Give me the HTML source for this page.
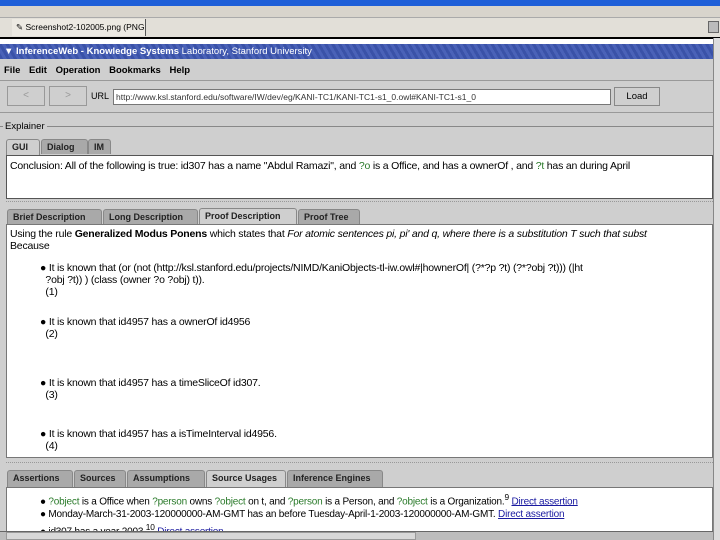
<!DOCTYPE html>
<html><head><style>
*{margin:0;padding:0;box-sizing:border-box}
body{width:720px;height:540px;overflow:hidden;background:#cfcfcf;font-family:"Liberation Sans",sans-serif;font-size:10px;color:#000;position:relative}
.a{position:absolute}
.tab{position:absolute;height:15px;border:1px solid #888;border-bottom:none;background:#a9a9a9;font-weight:bold;font-size:9px;padding:2px 5px;color:#222;border-radius:3px 3px 0 0;white-space:nowrap;overflow:hidden}
.tab.s{background:#cfcfcf}
.w{background:#fff;border:1px solid #777}
.g{color:#2a7a2a}
.l{color:#1a1aa0;text-decoration:underline}
.t{font-size:10.5px;letter-spacing:-0.2px;white-space:nowrap}
</style></head><body>
<div class="a" style="left:0;top:0;width:720px;height:6px;background:#1f5fd8"></div>
<div class="a" style="left:0;top:6px;width:720px;height:12px;background:#d8d4cc;border-bottom:1px solid #aaa"></div>
<div class="a" style="left:0;top:18px;width:720px;height:20px;background:#e2dfd8"></div>
<div class="a" style="left:12px;top:19px;width:134px;height:17px;border-right:1px solid #555;padding:3px 4px;font-size:8.5px;background:#ece9e2;white-space:nowrap;overflow:hidden">✎ Screenshot2-102005.png (PNG Ima...</div>
<div class="a" style="left:708px;top:21px;width:11px;height:12px;background:#bbb;border:1px solid #666"></div>
<div class="a" style="left:0;top:37px;width:720px;height:2px;background:#000"></div>
<div class="a" style="left:0;top:39px;width:720px;height:5px;background:#fff"></div>
<div class="a" style="left:0;top:44px;width:713px;height:15px;background:repeating-linear-gradient(60deg,#3a52a8 0 3px,#4a62b8 3px 6px);color:#fff;font-size:9.5px;padding:2px 4px;font-weight:bold;white-space:nowrap">▼ InferenceWeb - Knowledge Systems <span style="font-weight:normal">Laboratory, Stanford University</span></div>
<div class="a" style="left:713px;top:38px;width:7px;height:502px;background:#ddd;border-left:1px solid #888"></div>
<div class="a" style="left:4px;top:65px;font-weight:bold;font-size:9.5px;word-spacing:6px;white-space:nowrap">File Edit Operation Bookmarks Help</div>
<div class="a" style="left:0;top:80px;width:713px;height:33px;border-top:1px solid #999;border-bottom:1px solid #999"></div>
<div class="a" style="left:7px;top:86px;width:38px;height:20px;border:1px solid #999;color:#999;text-align:center;line-height:18px">&lt;</div>
<div class="a" style="left:49px;top:86px;width:38px;height:20px;border:1px solid #999;color:#999;text-align:center;line-height:18px">&gt;</div>
<div class="a" style="left:91px;top:91px;font-size:9px">URL</div>
<div class="a w" style="left:113px;top:89px;width:498px;height:16px;font-size:8.5px;padding:2px 2px;color:#333;white-space:nowrap;overflow:hidden">http://www.ksl.stanford.edu/software/IW/dev/eg/KANI-TC1/KANI-TC1-s1_0.owl#KANI-TC1-s1_0</div>
<div class="a" style="left:614px;top:87px;width:46px;height:19px;border:1px solid #888;text-align:center;line-height:17px;font-size:9.5px">Load</div>
<div class="a" style="left:0;top:126px;width:713px;height:1px;background:#888"></div>
<div class="a" style="left:3px;top:121px;background:#cfcfcf;padding:0 2px;font-size:9.5px">Explainer</div>
<div class="tab s" style="left:6px;top:139px;width:34px;height:16px">GUI</div>
<div class="tab" style="left:41px;top:139px;width:47px">Dialog</div>
<div class="tab" style="left:88px;top:139px;width:23px">IM</div>
<div class="a w t" style="left:6px;top:155px;width:707px;height:44px;padding:4px 3px;border-color:#555;overflow:hidden">Conclusion: All of the following is true: id307 has a name "Abdul Ramazi", and <span class="g">?o</span> is a Office, and has a ownerOf , and <span class="g">?t</span> has an during April</div>
<div class="a" style="left:6px;top:201px;width:707px;height:4px;border-top:1px dotted #999"></div>
<div class="tab" style="left:7px;top:209px;width:95px">Brief Description</div>
<div class="tab" style="left:103px;top:209px;width:95px">Long Description</div>
<div class="tab s" style="left:199px;top:208px;width:98px;height:17px">Proof Description</div>
<div class="tab" style="left:298px;top:209px;width:62px">Proof Tree</div>
<div class="a w t" style="left:6px;top:224px;width:707px;height:234px;padding:3px 3px;overflow:hidden;line-height:12px">
Using the rule <b>Generalized Modus Ponens</b> which states that <i>For atomic sentences pi, pi' and q, where there is a substitution T such that subst</i><br>Because
<div style="margin-left:30px;margin-top:10px">● It is known that (or (not (http://ksl.stanford.edu/projects/NIMD/KaniObjects-tl-iw.owl#|hownerOf| (?*?p ?t) (?*?obj ?t))) (|ht<br>&nbsp;&nbsp;?obj ?t)) ) (class (owner ?o ?obj) t)).<br>&nbsp;&nbsp;(1)</div>
<div style="margin-left:30px;margin-top:18px">● It is known that id4957 has a ownerOf id4956<br>&nbsp;&nbsp;(2)</div>
<div style="margin-left:30px;margin-top:37px">● It is known that id4957 has a timeSliceOf id307.<br>&nbsp;&nbsp;(3)</div>
<div style="margin-left:30px;margin-top:27px">● It is known that id4957 has a isTimeInterval id4956.<br>&nbsp;&nbsp;(4)</div>
</div>
<div class="a" style="left:6px;top:462px;width:707px;height:4px;border-top:1px dotted #999"></div>
<div class="tab" style="left:7px;top:470px;width:66px;height:17px">Assertions</div>
<div class="tab" style="left:74px;top:470px;width:52px;height:17px">Sources</div>
<div class="tab" style="left:127px;top:470px;width:78px;height:17px">Assumptions</div>
<div class="tab s" style="left:206px;top:470px;width:80px;height:17px">Source Usages</div>
<div class="tab" style="left:287px;top:470px;width:96px;height:17px">Inference Engines</div>
<div class="a w t" style="left:6px;top:487px;width:707px;height:45px;padding:3px 0 0 33px;line-height:13px;overflow:hidden;font-size:10px">
● <span class="g">?object</span> is a Office when <span class="g">?person</span> owns <span class="g">?object</span> on t, and <span class="g">?person</span> is a Person, and <span class="g">?object</span> is a Organization.<sup>9</sup> <span class="l">Direct assertion</span><br>
● Monday-March-31-2003-120000000-AM-GMT has an before Tuesday-April-1-2003-120000000-AM-GMT. <span class="l">Direct assertion</span><br>
● id307 has a year 2003.<sup>10</sup> <span class="l">Direct assertion</span></div>
<div class="a" style="left:0;top:531px;width:713px;height:9px;background:#bcbcbc;border-top:1px solid #666"></div>
<div class="a" style="left:6px;top:532px;width:410px;height:8px;background:#d8d8d8;border:1px solid #999"></div>
</body></html>
